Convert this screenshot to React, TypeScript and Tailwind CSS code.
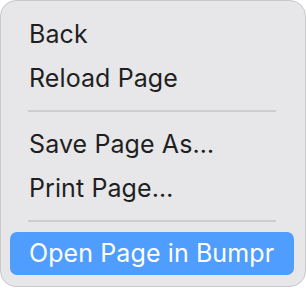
export default function App() {
  const font = { fontFamily: "Inter, 'Noto Sans', sans-serif" };
  return (
    <div
      className="w-[306px] h-[287px] bg-[#e7e7e9] border border-[#c9c9cb] rounded-[16px] pt-[12px] pl-[9px] pr-[11px] text-[#1f1f1f] text-[25px] tracking-[0.1px]"
      style={font}
    >
      <div className="h-[44px] flex items-center pl-[19px]">Back</div>
      <div className="h-[44px] flex items-center pl-[19px]">Reload Page</div>
      <div className="mt-[9px] mb-[11px] ml-[18px] mr-[18px] h-[2px] bg-[#cdcdcf]" />
      <div className="h-[44px] flex items-center pl-[19px]">Save Page As…</div>
      <div className="h-[44px] flex items-center pl-[19px]">Print Page…</div>
      <div className="mt-[9px] mb-[10px] ml-[18px] mr-[18px] h-[2px] bg-[#cdcdcf]" />
      <div className="h-[43px] flex items-center pl-[19px] rounded-[7px] bg-[#4f9dfe] text-white">
        Open Page in Bumpr
      </div>
    </div>
  );
}
